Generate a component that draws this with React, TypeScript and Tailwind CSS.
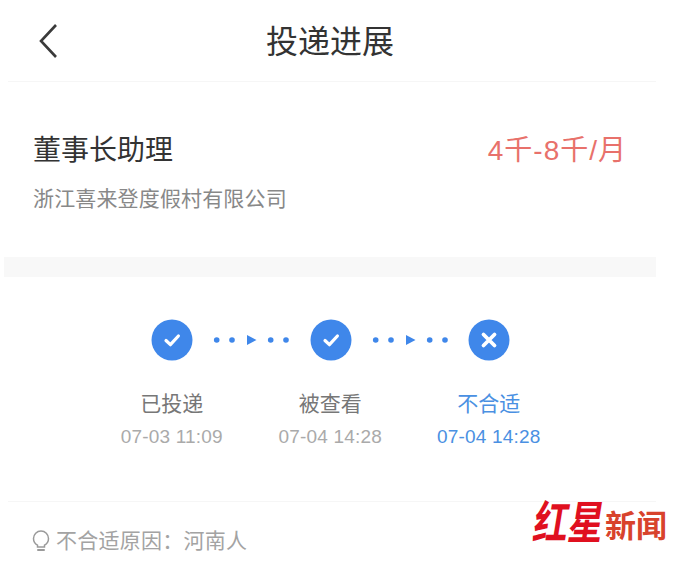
import React from 'react'

const FONT = "font-['Liberation_Sans','Noto_Sans_CJK_SC',sans-serif]"

// ── Timeline data ───────────────────────────────────────────────
const STEPS = [
  { label: '已投递', time: '07-03 11:09', kind: 'check', active: false },
  { label: '被查看', time: '07-04 14:28', kind: 'check', active: false },
  { label: '不合适', time: '07-04 14:28', kind: 'cross', active: true },
]

function StepIcon({ kind }: { kind: string }) {
  return (
    <svg width="42" height="42" viewBox="0 0 42 42" className="shrink-0">
      <circle cx="21" cy="21" r="20.5" fill="#3f87ea" />
      {kind === 'check' ? (
        <path d="M15 21.500l4.400 4.200 8-8.700" fill="none" stroke="#fff" strokeWidth="3.200" strokeLinecap="round" strokeLinejoin="round" />
      ) : (
        <path d="M15.500 15.500l11 11M26.500 15.500l-11 11" fill="none" stroke="#fff" strokeWidth="3.800" strokeLinecap="round" />
      )}
    </svg>
  )
}

function Dots() {
  return (
    <svg width="78" height="12" viewBox="0 0 78 12" className="shrink-0">
      <g fill="#3f87ea">
        <circle cx="3.700" cy="6" r="2.800" />
        <circle cx="19" cy="6" r="2.800" />
        <path d="M34 1l9.500 5-9.500 5z" />
        <circle cx="57.700" cy="6" r="2.800" />
        <circle cx="73" cy="6" r="2.800" />
      </g>
    </svg>
  )
}

export default function App() {
  return (
    <div className={`${FONT} relative h-[567px] w-[676px] overflow-hidden bg-white`}>
      {/* Header */}
      <div className="mx-2 flex h-[82px] w-[648px] items-center justify-center border-b border-[#f6f6f6] pr-[4px] pt-[2px]">
        <svg width="22" height="36" viewBox="0 0 22 36" className="absolute left-[38px] top-[23px]">
          <path d="M18 2L3 18l15 16" fill="none" stroke="#3a3a3a" strokeWidth="2.600" />
        </svg>
        <h1 className="text-[32px] leading-none text-[#333]">投递进展</h1>
      </div>

      {/* Job */}
      <div className="flex h-[175px] flex-col pl-[33px] pr-[49px] pt-[51px]">
        <div className="flex items-center justify-between">
          <span className="text-[28px] leading-[36px] text-[#333]">董事长助理</span>
          <span className="text-[28px] leading-[36px] tracking-[1px] text-[#e8716b]">4千-8千/月</span>
        </div>
        <p className="mt-[17px] text-[21px] leading-[26px] tracking-[0.15px] text-[#888]">浙江喜来登度假村有限公司</p>
      </div>

      <div className="ml-1 h-5 w-[652px] bg-[#f8f8f8]" />

      {/* Progress */}
      <div className="flex pl-[151px] pt-[42px]">
        <div className="flex items-center">
          <StepIcon kind="check" />
          <span className="flex w-[116.5px] pl-[20px]"><Dots /></span>
          <StepIcon kind="check" />
          <span className="flex w-[116.5px] pl-[20px]"><Dots /></span>
          <StepIcon kind="cross" />
        </div>
      </div>
      <div className="mt-[29px] flex pl-[92.5px]">
        {STEPS.map((s) => (
          <div key={s.label + s.time} className="flex w-[158.5px] flex-col items-center">
            <span className={`text-[21px] leading-[28px] ${s.active ? 'text-[#4a90e2]' : 'text-[#777]'}`}>{s.label}</span>
            <span className={`mt-[7px] text-[19px] leading-[24px] tracking-[0.2px] ${s.active ? 'text-[#4a90e2]' : 'text-[#aaa]'}`}>{s.time}</span>
          </div>
        ))}
      </div>

      {/* Reason */}
      <div className="mx-2 mt-[52px] flex w-[648px] items-center border-t border-[#f6f6f6] pl-[24px] pt-[25px]">
        <svg width="18" height="24" viewBox="0 0 18 24" className="mr-[6px]">
          <path d="M5.500 16.200C3 14.800 1.500 12.300 1.500 9.500a7.500 7.500 0 0 1 15 0c0 2.800-1.500 5.300-4 6.700v1.800h-7z" fill="none" stroke="#9a9a9a" strokeWidth="1.500" />
          <path d="M6 21h6" stroke="#9a9a9a" strokeWidth="2" strokeLinecap="round" />
        </svg>
        <span className="text-[21px] leading-[28px] tracking-[0.25px] text-[#a3a3a3]">不合适原因：河南人</span>
      </div>

      {/* Watermark */}
      <div className="absolute left-[538px] top-[500px] flex h-[47px] items-start">
        <span className="origin-top-left -skew-x-12 scale-y-[1.3] text-[35px] font-bold leading-[36px] text-[#e0101f]">红星</span>
        <span className="mt-[11px] -ml-[3px] text-[31px] font-bold leading-[32px] text-[#d8432c]">新闻</span>
      </div>
    </div>
  )
}
